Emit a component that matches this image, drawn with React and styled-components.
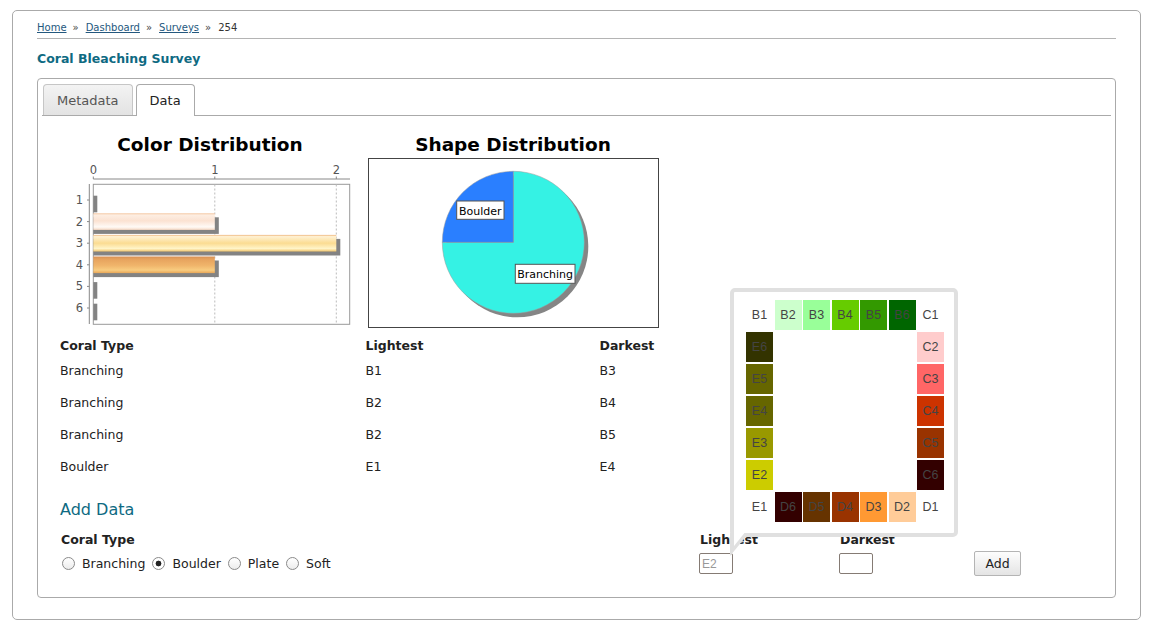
import React, { useState } from "react";
import styled, { createGlobalStyle } from "styled-components";

const GlobalStyle = createGlobalStyle`
  body {
    margin: 0;
    background: #fff;
    font-family: "DejaVu Sans", Verdana, sans-serif;
    font-size: 12.5px;
    color: #222;
  }
`;

const Page = styled.div`
  box-sizing: border-box;
  width: 1129px;
  margin: 10px 0 0 12px;
  padding: 0 24px 21px;
  border: 1px solid #aaa;
  border-radius: 5px;
`;

const Breadcrumb = styled.nav`
  padding: 10px 0 3px;
  font-size: 10px;
  line-height: 14px;
  color: #333;
  border-bottom: 1px solid #b4b4b4;
`;

const Crumb = styled.a`
  color: #24587e;
  text-decoration: underline;
`;

const Sep = styled.span`
  margin: 0 7px 0 6px;
  color: #444;
`;

const SurveyTitle = styled.h1`
  margin: 12px 0 0;
  font-size: 12.5px;
  line-height: 16px;
  font-weight: bold;
  color: #0e6a82;
`;

const Panel = styled.div`
  margin-top: 11px;
  padding: 5px 4px 0;
  border: 1px solid #aaa;
  border-radius: 4px;
`;

const TabNav = styled.div`
  display: flex;
  align-items: flex-start;
  gap: 3px;
  height: 31px;
  padding-left: 1px;
  border-bottom: 1px solid #aaa;
`;

const Tab = styled.button`
  box-sizing: border-box;
  height: ${(p) => (p.$active ? "32px" : "31px")};
  margin: 0;
  padding: 0 13px;
  border: 1px solid ${(p) => (p.$active ? "#aaa" : "#c6c6c6")};
  border-bottom: none;
  border-radius: 4px 4px 0 0;
  background: ${(p) =>
    p.$active ? "#fff" : "linear-gradient(#f3f3f3, #e3e3e3)"};
  font-family: "DejaVu Sans", Verdana, sans-serif;
  font-size: 13px;
  line-height: 31px;
  color: ${(p) => (p.$active ? "#222" : "#555")};
  cursor: pointer;
`;

const TabBody = styled.div`
  padding: 12px 18px 21px;
`;

const ChartRow = styled.div`
  display: flex;
  gap: 3px;
`;

const ChartSvg = styled.svg`
  display: block;
  width: 300px;
  height: 200px;
  font-family: "DejaVu Sans", Verdana, sans-serif;
`;

const DataTable = styled.div`
  display: grid;
  grid-template-columns: 305.5px 234px 200px;
  margin-top: 10px;
`;

const HeadCell = styled.div`
  font-weight: bold;
  line-height: 16px;
  padding-bottom: 1px;
`;

const Cell = styled.div`
  line-height: 16px;
  padding: 8px 0;
`;

const SectionTitle = styled.h2`
  margin: 17px 0 0;
  font-size: 16px;
  line-height: 20px;
  font-weight: normal;
  color: #0e6a82;
`;

const FormGrid = styled.div`
  display: grid;
  grid-template-columns: 639px 140px 135px auto;
  grid-template-rows: 16px 25px;
  row-gap: 3px;
  align-items: center;
  margin-top: 12px;
`;

const FieldLabel = styled.label`
  font-weight: bold;
  line-height: 16px;
  padding-left: 1px;
`;

const RadioGroup = styled.div`
  display: flex;
  align-items: center;
  line-height: 16px;
  padding-left: 2px;
`;

const RadioOption = styled.label`
  display: inline-flex;
  align-items: center;
  gap: 7px;
  margin-right: 7px;
  cursor: pointer;
`;

const Radio = styled.input`
  appearance: none;
  box-sizing: border-box;
  width: 13px;
  height: 13px;
  margin: 0;
  border: 1px solid #8a8a8a;
  border-radius: 50%;
  background: linear-gradient(#fff, #ececec);
  &:checked {
    background: radial-gradient(circle, #222 0 2.6px, #fff 3.2px);
  }
`;

const InputWrap = styled.div`
  position: relative;
  width: 34px;
`;

const ColorInput = styled.input`
  box-sizing: border-box;
  display: block;
  width: 34px;
  height: 21px;
  margin: 0;
  padding: 0 2px;
  border: 1px solid #857b74;
  border-radius: 2px;
  font-family: "Liberation Sans", Arial, sans-serif;
  font-size: 12px;
  color: #333;
  &::placeholder {
    color: #999;
  }
`;

const AddButton = styled.button`
  box-sizing: border-box;
  width: 47px;
  height: 25px;
  padding: 0;
  border: 1px solid #b4b4b4;
  border-radius: 2px;
  background: linear-gradient(#fdfdfd, #e4e4e4);
  font-family: "DejaVu Sans", Verdana, sans-serif;
  font-size: 12.5px;
  color: #222;
`;

const Palette = styled.div`
  position: absolute;
  left: 31px;
  top: -265px;
  z-index: 2;
  box-sizing: border-box;
  width: 228px;
  height: 249px;
  padding: 8px 11px 11px 12px;
  border: 4px solid #e0e0e0;
  border-radius: 5px;
  background: #fff;
  display: grid;
  grid-template-columns: repeat(7, 27px);
  grid-template-rows: repeat(7, 30px);
  column-gap: 1.5px;
  row-gap: 2px;

  &::before {
    content: "";
    position: absolute;
    left: -4px;
    bottom: -23px;
    border-top: 23px solid #e0e0e0;
    border-right: 19px solid transparent;
  }
  &::after {
    content: "";
    position: absolute;
    left: 0;
    bottom: -13px;
    border-top: 15px solid #fff;
    border-right: 12px solid transparent;
  }
`;

const Swatch = styled.div`
  grid-row: ${(p) => p.$row};
  grid-column: ${(p) => p.$col};
  display: flex;
  align-items: center;
  justify-content: center;
  background: ${(p) => p.$color};
  font-family: "Liberation Sans", Arial, sans-serif;
  font-size: 12.5px;
  color: #444;
  cursor: pointer;
`;

const swatches = [
  ["B1", 1, 1, "#fff"],
  ["B2", 1, 2, "#ccffcc"],
  ["B3", 1, 3, "#99ff99"],
  ["B4", 1, 4, "#66cc00"],
  ["B5", 1, 5, "#339900"],
  ["B6", 1, 6, "#006600"],
  ["C1", 1, 7, "#fff"],
  ["E6", 2, 1, "#333300"],
  ["C2", 2, 7, "#ffcccc"],
  ["E5", 3, 1, "#666600"],
  ["C3", 3, 7, "#ff6666"],
  ["E4", 4, 1, "#666600"],
  ["C4", 4, 7, "#cc3300"],
  ["E3", 5, 1, "#999900"],
  ["C5", 5, 7, "#993300"],
  ["E2", 6, 1, "#cccc00"],
  ["C6", 6, 7, "#330000"],
  ["E1", 7, 1, "#fff"],
  ["D6", 7, 2, "#330000"],
  ["D5", 7, 3, "#663300"],
  ["D4", 7, 4, "#993300"],
  ["D3", 7, 5, "#ff9933"],
  ["D2", 7, 6, "#ffcc99"],
  ["D1", 7, 7, "#fff"],
];

const records = [
  ["Branching", "B1", "B3"],
  ["Branching", "B2", "B4"],
  ["Branching", "B2", "B5"],
  ["Boulder", "E1", "E4"],
];

const colorCounts = [0, 1, 2, 1, 0, 0];
const barFills = ["peach", "peach", "yellow", "orange", "peach", "peach"];

const X0 = 33.3;
const UNIT = 121.5;

const ColorChart = () => (
  <ChartSvg viewBox="0 0 300 200">
    <defs>
      <linearGradient id="peach" x1="0" y1="0" x2="0" y2="1">
        <stop offset="0" stopColor="#f3c39b" />
        <stop offset="0.1" stopColor="#fdeee2" />
        <stop offset="0.45" stopColor="#fbe2d2" />
        <stop offset="0.82" stopColor="#fffaf6" />
        <stop offset="1" stopColor="#f7d9c4" />
      </linearGradient>
      <linearGradient id="yellow" x1="0" y1="0" x2="0" y2="1">
        <stop offset="0" stopColor="#edb57e" />
        <stop offset="0.1" stopColor="#fff1d2" />
        <stop offset="0.5" stopColor="#fbdc92" />
        <stop offset="0.82" stopColor="#fff4c8" />
        <stop offset="1" stopColor="#f1c56c" />
      </linearGradient>
      <linearGradient id="orange" x1="0" y1="0" x2="0" y2="1">
        <stop offset="0" stopColor="#d58f55" />
        <stop offset="0.15" stopColor="#e6a25d" />
        <stop offset="0.55" stopColor="#f0b56b" />
        <stop offset="0.82" stopColor="#f8cc80" />
        <stop offset="1" stopColor="#e9a758" />
      </linearGradient>
    </defs>
    <text x="150" y="23" textAnchor="middle" fontSize="18.5" fontWeight="bold" fill="#000">
      Color Distribution
    </text>
    {[0, 1, 2].map((v) => (
      <g key={v}>
        <text x={X0 + v * UNIT} y="46" textAnchor="middle" fontSize="11.5" fill="#555">
          {v}
        </text>
        <line x1={X0 + v * UNIT} y1="48.5" x2={X0 + v * UNIT} y2="51" stroke="#888" />
      </g>
    ))}
    <line x1={X0} y1="51" x2="290" y2="51" stroke="#888" />
    <line x1="29.3" y1="56" x2="29.3" y2="196" stroke="#888" />
    <rect x={X0} y="56.3" width="256.4" height="140" fill="#fff" stroke="#999" />
    {[1, 2].map((v) => (
      <line
        key={v}
        x1={X0 + v * UNIT}
        y1="56.5"
        x2={X0 + v * UNIT}
        y2="196"
        stroke="#bbb"
        strokeDasharray="2 2"
      />
    ))}
    {colorCounts.map((v, i) => {
      const cy = 72 + i * 21.6;
      const w = v * UNIT;
      return (
        <g key={i}>
          <line x1="27" y1={cy} x2="29.3" y2={cy} stroke="#888" />
          <text x="23" y={cy + 4} textAnchor="end" fontSize="11.5" fill="#555">
            {i + 1}
          </text>
          <rect x={X0} y={cy - 4.3} width={w + 4} height="16.6" fill="#838383" />
          {v > 0 && (
            <rect x={X0} y={cy - 8.3} width={w} height="16.6" fill={`url(#${barFills[i]})`} />
          )}
        </g>
      );
    })}
  </ChartSvg>
);

const ShapeChart = () => {
  const cx = 150.3;
  const cy = 114.3;
  const r = 71;
  return (
    <ChartSvg viewBox="0 0 300 200">
      <text x="150" y="23" textAnchor="middle" fontSize="18.5" fontWeight="bold" fill="#000">
        Shape Distribution
      </text>
      <rect x="5.5" y="30.5" width="290" height="169" fill="#fff" stroke="#444" />
      <circle cx={cx + 4} cy={cy + 4} r={r} fill="#858585" />
      <path
        d={`M${cx},${cy} L${cx},${cy - r} A${r},${r} 0 1,1 ${cx - r},${cy} Z`}
        fill="#35f2e4"
        stroke="#9a9a9a"
        strokeWidth="0.5"
      />
      <path
        d={`M${cx},${cy} L${cx},${cy - r} A${r},${r} 0 0,0 ${cx - r},${cy} Z`}
        fill="#2a7fff"
        stroke="#9a9a9a"
        strokeWidth="0.5"
      />
      <rect x="93.7" y="73" width="47.3" height="18.3" fill="#fff" stroke="#555" />
      <text x="117.3" y="86.5" textAnchor="middle" fontSize="11" fill="#000">
        Boulder
      </text>
      <rect x="152.3" y="136.3" width="59.7" height="19" fill="#fff" stroke="#555" />
      <text x="182.1" y="150" textAnchor="middle" fontSize="11" fill="#000">
        Branching
      </text>
    </ChartSvg>
  );
};

const App = () => {
  const [tab, setTab] = useState("data");
  const [coralType, setCoralType] = useState("Boulder");
  const [lightest, setLightest] = useState("");
  const [darkest, setDarkest] = useState("");

  return (
    <>
      <GlobalStyle />
      <Page>
        <Breadcrumb>
          <Crumb href="#">Home</Crumb>
          <Sep>»</Sep>
          <Crumb href="#">Dashboard</Crumb>
          <Sep>»</Sep>
          <Crumb href="#">Surveys</Crumb>
          <Sep>»</Sep>
          254
        </Breadcrumb>
        <SurveyTitle>Coral Bleaching Survey</SurveyTitle>

        <Panel>
          <TabNav>
            <Tab $active={tab === "metadata"} onClick={() => setTab("metadata")}>
              Metadata
            </Tab>
            <Tab $active={tab === "data"} onClick={() => setTab("data")}>
              Data
            </Tab>
          </TabNav>

          <TabBody>
            <ChartRow>
              <ColorChart />
              <ShapeChart />
            </ChartRow>

            <DataTable>
              <HeadCell>Coral Type</HeadCell>
              <HeadCell>Lightest</HeadCell>
              <HeadCell>Darkest</HeadCell>
              {records.map((rec, i) =>
                rec.map((val, j) => <Cell key={`${i}-${j}`}>{val}</Cell>)
              )}
            </DataTable>

            <SectionTitle>Add Data</SectionTitle>
            <FormGrid>
              <FieldLabel>Coral Type</FieldLabel>
              <FieldLabel>Lightest</FieldLabel>
              <FieldLabel>Darkest</FieldLabel>
              <div />
              <RadioGroup>
                {["Branching", "Boulder", "Plate", "Soft"].map((t) => (
                  <RadioOption key={t}>
                    <Radio
                      type="radio"
                      name="coralType"
                      checked={coralType === t}
                      onChange={() => setCoralType(t)}
                    />
                    {t}
                  </RadioOption>
                ))}
              </RadioGroup>
              <InputWrap>
                <ColorInput
                  placeholder="E2"
                  value={lightest}
                  onChange={(e) => setLightest(e.target.value)}
                />
                <Palette>
                  {swatches.map(([code, row, col, color]) => (
                    <Swatch
                      key={code}
                      $row={row}
                      $col={col}
                      $color={color}
                      onClick={() => setLightest(code)}
                    >
                      {code}
                    </Swatch>
                  ))}
                </Palette>
              </InputWrap>
              <InputWrap>
                <ColorInput value={darkest} onChange={(e) => setDarkest(e.target.value)} />
              </InputWrap>
              <div>
                <AddButton>Add</AddButton>
              </div>
            </FormGrid>
          </TabBody>
        </Panel>
      </Page>
    </>
  );
};

export default App;
